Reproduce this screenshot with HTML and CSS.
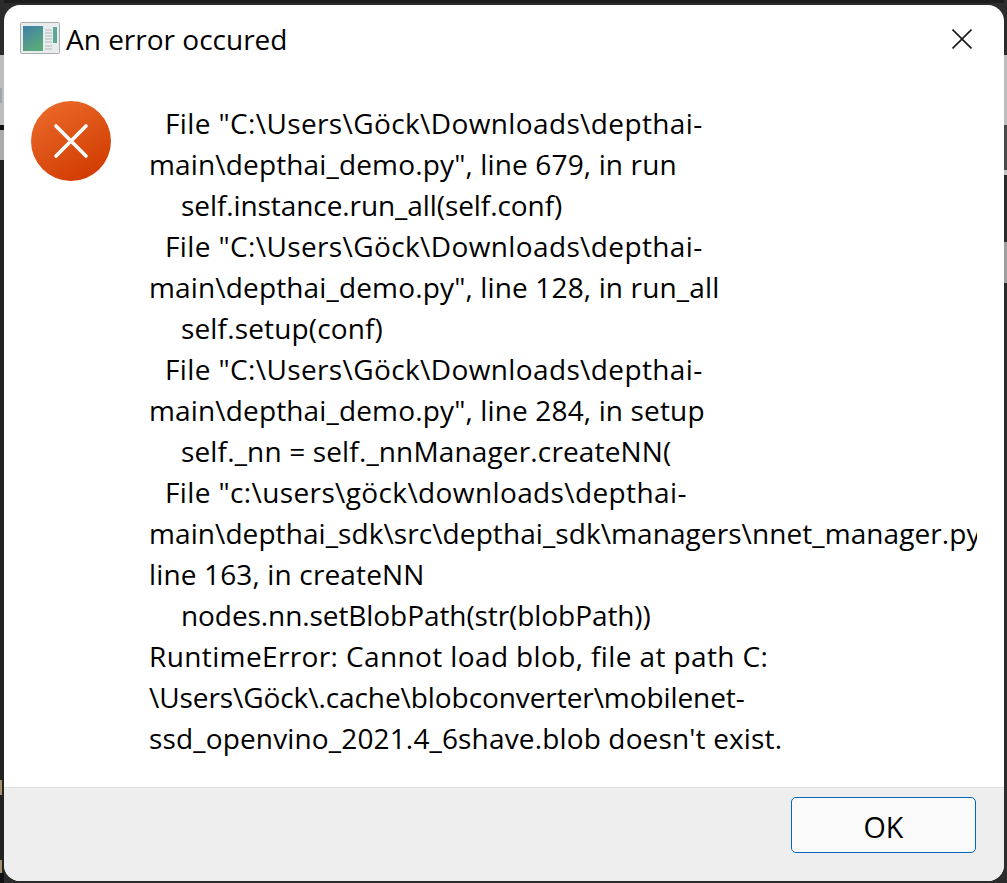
FILE: index.html
```html
<!DOCTYPE html>
<html lang="en">
<head>
<meta charset="utf-8">
<title>An error occured</title>
<link rel="stylesheet" href="styles.css">
</head>
<body>
<div class="screen">
  <main class="dialog">
    <header class="titlebar">
      <svg class="app-icon" viewBox="0 0 40 36" aria-hidden="true">
        <defs>
          <linearGradient id="pane" x1="0" y1="0" x2="0.5" y2="1">
            <stop offset="0" stop-color="#3f7fa8"/>
            <stop offset="1" stop-color="#5aa97c"/>
          </linearGradient>
        </defs>
        <rect x="0.5" y="0.5" width="39" height="31" rx="1" fill="#e9ecec" stroke="#a9adae"/>
        <rect x="3" y="4" width="20" height="25" fill="url(#pane)"/>
        <path d="M25 8h7M25 11h7M25 14h7M25 17h7M25 20h7M25 24h7M25 27h7" stroke="#c4c9ca" stroke-width="1.4" fill="none"/>
        <rect x="33" y="5" width="4" height="16" fill="#5da596"/>
      </svg>
      <h1 class="title">An error occured</h1>
      <button class="close" aria-label="Close">
        <svg viewBox="0 0 20 20" aria-hidden="true"><path d="M0.5 0.5L19.5 19.5M19.5 0.5L0.5 19.5"/></svg>
      </button>
    </header>
    <section class="body">
      <svg class="error-icon" viewBox="0 0 80 80" aria-hidden="true">
        <defs>
          <linearGradient id="err" x1="0.2" y1="0" x2="0.75" y2="1">
            <stop offset="0" stop-color="#ea6a2a"/>
            <stop offset="1" stop-color="#d03a00"/>
          </linearGradient>
        </defs>
        <circle cx="40" cy="40" r="40" fill="url(#err)"/>
        <path d="M25 25L55 55M55 25L25 55" stroke="#fff" stroke-width="3.6" stroke-linecap="round"/>
      </svg>
      <div class="message">
        <div class="l1 wide">File "C:\Users\Göck\Downloads\depthai-</div>
        <div>main\depthai_demo.py", line 679, in run</div>
        <div class="l2 tight">self.instance.run_all(self.conf)</div>
        <div class="l1 wide">File "C:\Users\Göck\Downloads\depthai-</div>
        <div>main\depthai_demo.py", line 128, in run_all</div>
        <div class="l2">self.setup(conf)</div>
        <div class="l1 wide">File "C:\Users\Göck\Downloads\depthai-</div>
        <div>main\depthai_demo.py", line 284, in setup</div>
        <div class="l2">self._nn = self._nnManager.createNN(</div>
        <div class="l1 wide">File "c:\users\göck\downloads\depthai-</div>
        <div class="snug">main\depthai_sdk\src\depthai_sdk\managers\nnet_manager.py",</div>
        <div>line 163, in createNN</div>
        <div class="l2 tight">nodes.nn.setBlobPath(str(blobPath))</div>
        <div class="wide">RuntimeError: Cannot load blob, file at path C:</div>
        <div class="tight">\Users\Göck\.cache\blobconverter\mobilenet-</div>
        <div>ssd_openvino_2021.4_6shave.blob doesn't exist.</div>
      </div>
    </section>
    <footer class="footer">
      <button class="ok">OK</button>
    </footer>
  </main>
</div>
</body>
</html>
```

FILE: styles.css
```css
* { box-sizing: border-box; }
html, body { margin: 0; height: 100%; }
body { background: #2b2b2b; overflow: hidden; }
.screen {
  width: 1007px;
  height: 883px;
  padding: 5px 3px 2px 4px;
  background-color: #2b2b2b;
  background-repeat: no-repeat;
  background-position: left top, left top, right top, left top;
  background-size: 2px 883px, 4px 883px, 3px 883px, 1007px 3px;
  background-image:
    linear-gradient(transparent 0 88px, #9aa5ad 88px 103px, transparent 103px 780px, #a58f6c 780px 795px, transparent 795px 860px, #a58f6c 860px 873px, transparent 873px),
    linear-gradient(#2b2b2b 0 55px, #bdbdbd 55px 125px, #111 125px 130px, #ababab 130px 160px, #222 160px 873px, #111 873px),
    linear-gradient(#2b2b2b 0 55px, #bdbdbd 55px 125px, #484848 125px 170px, #c4c4c4 170px 175px, #2b2b2b 175px 242px, #9e9e9e 242px 283px, #2b2b2b 283px),
    linear-gradient(#1c1c1c, #1c1c1c);
}
.dialog {
  height: 876px;
  background: #fff;
  border-radius: 16px;
  overflow: hidden;
  display: flex;
  flex-direction: column;
  font-family: "Open Sans", "Noto Sans", sans-serif;
  color: #000;
}
.titlebar {
  height: 67px;
  flex: none;
  display: flex;
  align-items: flex-start;
  padding: 17px 32px 0 16px;
}
.app-icon { width: 40px; height: 36px; flex: none; }
.title { margin: -2px 0 0 6px; font-size: 28px; font-weight: 400; line-height: 38px; flex: 1; }
.close { width: 20px; height: 20px; margin-top: 7px; padding: 0; border: 0; background: none; }
.close svg { display: block; width: 20px; height: 20px; fill: none; stroke: #1a1a1a; stroke-width: 1.6; }
.body { flex: 1; display: flex; align-items: flex-start; padding: 29px 26px 0 27px; min-height: 0; }
.error-icon { width: 80px; height: 80px; flex: none; }
.message {
  width: 828px;
  margin: 2px 0 0 38px;
  font-size: 28px;
  line-height: 41px;
  letter-spacing: 0.15px;
  white-space: nowrap;
  overflow: hidden;
}
.l1 { padding-left: 16px; }
.l2 { padding-left: 32px; }
.wide { letter-spacing: 0.38px; }
.snug { letter-spacing: 0.08px; }
.tight { letter-spacing: -0.08px; }
.footer {
  height: 94px;
  flex: none;
  background: #eeeeee;
  border-top: 1px solid #dedede;
  display: flex;
  justify-content: flex-end;
  padding: 9px 28px 0 0;
}
.ok {
  width: 185px;
  height: 56px;
  background: #fafafa;
  border: 1.5px solid #0067c0;
  border-radius: 5px;
  font-family: "Open Sans", "Noto Sans", sans-serif;
  font-size: 28.7px;
  color: #000;
  padding: 3px 0 0;
}
```
